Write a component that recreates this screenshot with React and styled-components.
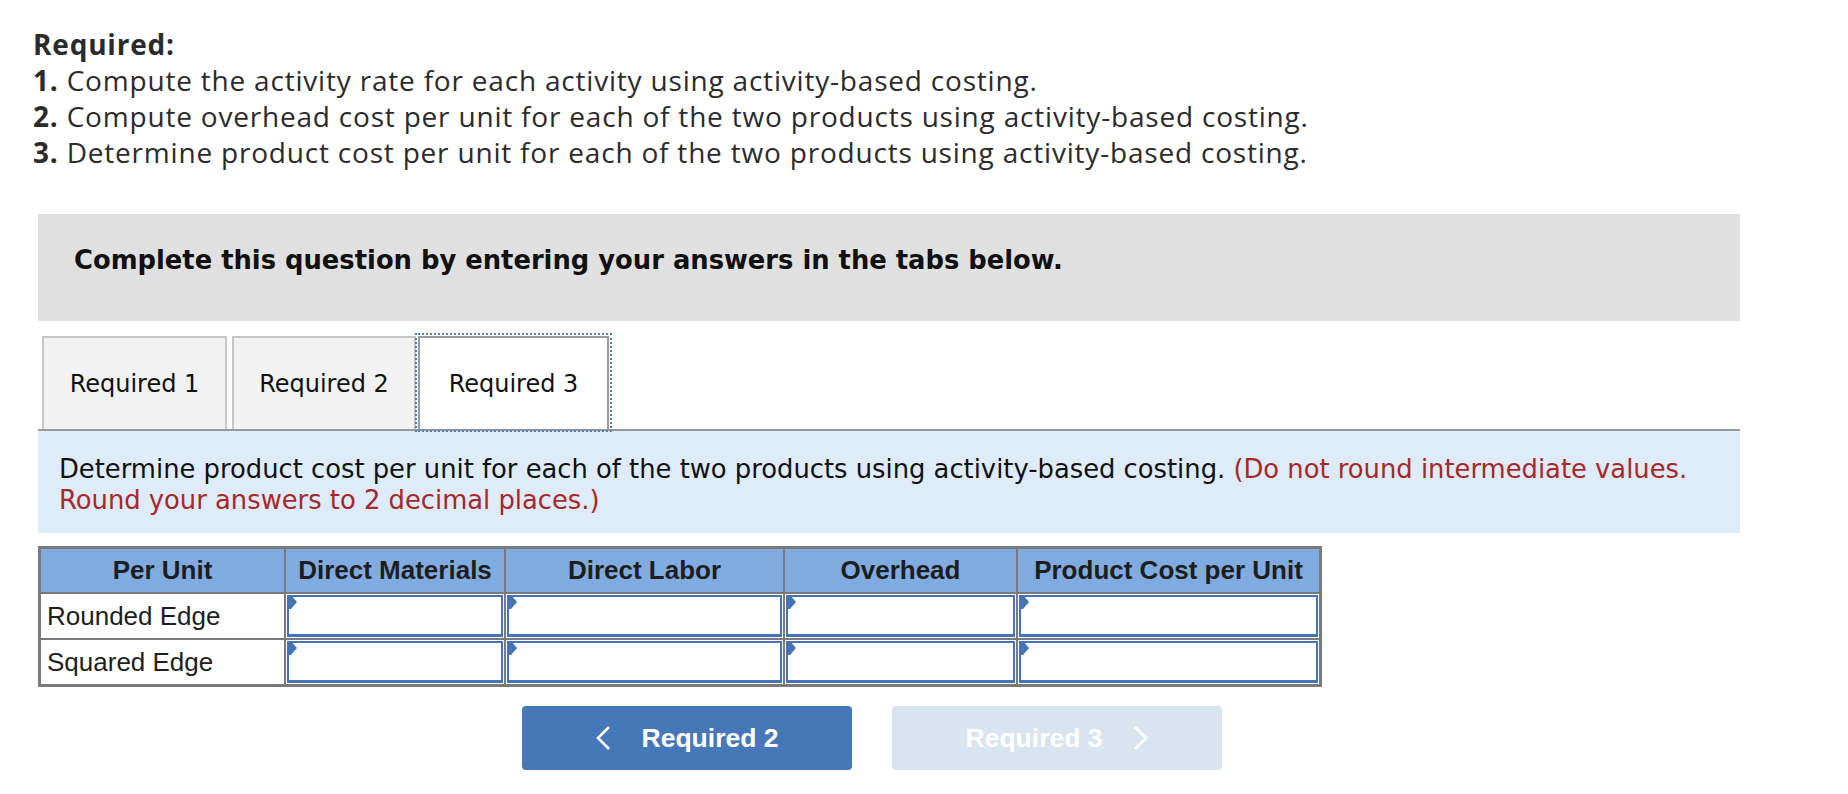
import React from "react";
import styled, { createGlobalStyle } from "styled-components";

const GlobalStyle = createGlobalStyle`
  body {
    margin: 0;
    background: #ffffff;
  }
`;

const Page = styled.div`
  padding: 26px 108px 20px 38px;
`;

const Instructions = styled.div`
  margin-left: -5px;
  font-family: "Open Sans", "Liberation Sans", sans-serif;
  font-size: 28px;
  line-height: 36px;
  letter-spacing: 0.8px;
  color: #2b2b2b;
`;

const Title = styled.div`
  font-weight: bold;
`;

const Step = styled.div``;

const Num = styled.b`
  font-weight: bold;
`;

const Banner = styled.div`
  margin-top: 44px;
  height: 107px;
  box-sizing: border-box;
  padding: 0 36px 16px;
  display: flex;
  align-items: center;
  background: #e0e0e0;
  font-family: "DejaVu Sans", Verdana, sans-serif;
  font-size: 25.8px;
  font-weight: bold;
  color: #111111;
`;

const TabRow = styled.div`
  margin-top: 15px;
  padding-left: 4px;
  display: flex;
  align-items: flex-end;
  border-bottom: 2px solid #9a9a9a;
`;

const Tab = styled.div`
  width: ${(p) => p.$w}px;
  height: 93px;
  box-sizing: border-box;
  margin-right: ${(p) => p.$gap}px;
  display: flex;
  align-items: center;
  justify-content: center;
  border: 2px solid ${(p) => (p.$active ? "#9a9a9a" : "#c6c6c6")};
  border-bottom: none;
  background: ${(p) => (p.$active ? "#ffffff" : "#f2f2f2")};
  font-family: "DejaVu Sans", Verdana, sans-serif;
  font-size: 24px;
  color: #111111;
  ${(p) => p.$active && "outline: 2px dotted #4a7fc8; outline-offset: 1px;"}
`;

const Prompt = styled.div`
  height: 102px;
  box-sizing: border-box;
  padding: 23px 12px 0 21px;
  background: #deebf8;
  font-family: "DejaVu Sans", Verdana, sans-serif;
  font-size: 25.8px;
  line-height: 31px;
  color: #111111;
  white-space: nowrap;
`;

const Note = styled.span`
  color: #a8272a;
`;

const Grid = styled.div`
  margin-top: 13px;
  width: 1284px;
  box-sizing: border-box;
  display: grid;
  grid-template-columns: 243px 218px 277px 231px 301px;
  grid-template-rows: 43px 44px 44px;
  gap: 2px;
  border: 3px solid #7a7a7a;
  background: #7a7a7a;
  font-family: "Liberation Sans", Arial, sans-serif;
  font-size: 26px;
  color: #1e1e1e;
`;

const HeadCell = styled.div`
  display: flex;
  align-items: center;
  justify-content: center;
  background: #80abe0;
  font-weight: bold;
`;

const LabelCell = styled.div`
  display: flex;
  align-items: center;
  padding-left: 6px;
  background: #ffffff;
`;

const InputCell = styled.div`
  position: relative;
  background: #ffffff;
  padding: 1px;
`;

const AnswerInput = styled.input`
  width: 100%;
  height: 100%;
  box-sizing: border-box;
  margin: 0;
  border: 2px solid #4673b5;
  border-bottom-width: 3px;
  background: #ffffff;
  outline: none;
`;

const Marker = styled.svg`
  position: absolute;
  top: 1px;
  left: 1px;
`;

const Nav = styled.div`
  margin-top: 19px;
  padding-left: 484px;
  display: flex;
  gap: 40px;
`;

const NavButton = styled.button`
  width: 330px;
  height: 64px;
  display: flex;
  align-items: center;
  justify-content: center;
  gap: 31px;
  border: none;
  border-radius: 4px;
  background: ${(p) => (p.disabled ? "#d9e4f0" : "#4677b8")};
  color: #ffffff;
  font-family: "Liberation Sans", Arial, sans-serif;
  font-size: 26.5px;
  font-weight: bold;
  padding: 0;
`;

const Chevron = ({ dir }) => (
  <svg width="15" height="26" viewBox="0 0 15 26">
    <polyline
      points={dir === "left" ? "13,2 2,13 13,24" : "2,2 13,13 2,24"}
      fill="none"
      stroke="#ffffff"
      strokeWidth="2.6"
    />
  </svg>
);

const columns = ["Per Unit", "Direct Materials", "Direct Labor", "Overhead", "Product Cost per Unit"];
const rows = ["Rounded Edge", "Squared Edge"];

const tabs = [
  { label: "Required 1", w: 185, gap: 5 },
  { label: "Required 2", w: 184, gap: 2 },
  { label: "Required 3", w: 191, gap: 0, active: true },
];

const App = () => {
  return (
    <Page>
      <GlobalStyle />
      <Instructions>
        <Title>Required:</Title>
        <Step>
          <Num>1.</Num> Compute the activity rate for each activity using activity-based costing.
        </Step>
        <Step>
          <Num>2.</Num> Compute overhead cost per unit for each of the two products using activity-based costing.
        </Step>
        <Step>
          <Num>3.</Num> Determine product cost per unit for each of the two products using activity-based costing.
        </Step>
      </Instructions>

      <Banner>Complete this question by entering your answers in the tabs below.</Banner>

      <TabRow>
        {tabs.map((t) => (
          <Tab key={t.label} $w={t.w} $gap={t.gap} $active={t.active}>
            {t.label}
          </Tab>
        ))}
      </TabRow>

      <Prompt>
        Determine product cost per unit for each of the two products using activity-based costing.{" "}
        <Note>
          (Do not round intermediate values.
          <br />
          Round your answers to 2 decimal places.)
        </Note>
      </Prompt>

      <Grid>
        {columns.map((c) => (
          <HeadCell key={c}>{c}</HeadCell>
        ))}
        {rows.map((r) => (
          <React.Fragment key={r}>
            <LabelCell>{r}</LabelCell>
            {columns.slice(1).map((c) => (
              <InputCell key={c}>
                <AnswerInput type="text" aria-label={r + " " + c} />
                <Marker width="10" height="14" viewBox="0 0 10 14">
                  <polygon points="0,0 4,0 10,7 4,14 0,14" fill="#4673b5" />
                </Marker>
              </InputCell>
            ))}
          </React.Fragment>
        ))}
      </Grid>

      <Nav>
        <NavButton>
          <Chevron dir="left" />
          Required 2
        </NavButton>
        <NavButton disabled>
          Required 3
          <Chevron dir="right" />
        </NavButton>
      </Nav>
    </Page>
  );
};

export default App;
